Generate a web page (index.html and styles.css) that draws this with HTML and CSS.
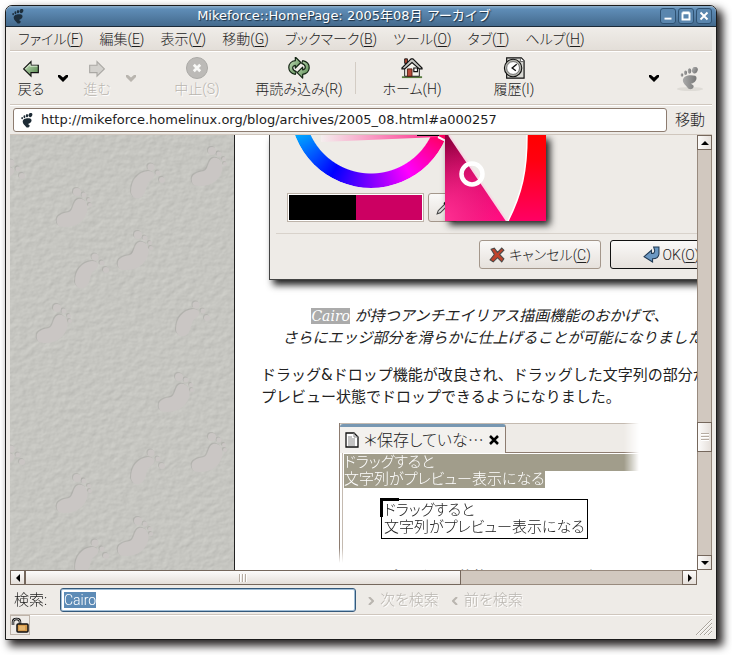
FILE: index.html
```
<!DOCTYPE html>
<html lang="ja">
<head>
<meta charset="utf-8">
<title>Mikeforce::HomePage: 2005年08月 アーカイブ</title>
<link rel="stylesheet" href="styles.css">
</head>
<body>
<svg class="defs" width="0" height="0" aria-hidden="true">
  <defs>
    <symbol id="gnome" viewBox="2 0 21 26">
      <ellipse cx="18.5" cy="3.5" rx="3.2" ry="3.8" transform="rotate(25 18.500 3.500)"/>
      <ellipse cx="12.500" cy="4.500" rx="2" ry="3"/>
      <ellipse cx="8" cy="6.500" rx="1.700" ry="2.500"/>
      <ellipse cx="4" cy="9" rx="1.500" ry="2"/>
      <path d="M19 10C13 8 5 10 5 15c0 4 4 6 5 8 1 3 6 3 7 0 1-2-1-3-3-4 4 0 9-6 5-9z"/>
    </symbol>
    <symbol id="caret" viewBox="0 0 10 7"><path d="M0 0l2 0 3 2.500L8 0h2v2L5 7 0 2z"/></symbol>
    <linearGradient id="green" x1="0" y1="0" x2="1" y2="1">
      <stop offset="0" stop-color="#cfe6c4"/><stop offset="1" stop-color="#4c8045"/>
    </linearGradient>
    <g id="foot-a">
      <path d="M-20 12C-22 4-14 2-8 1-3-1-5-9 1-12 7-14 12-7 10 1 7 11-2 16-11 16-17 16-19 15-20 12z"/>
      <circle cx="0" cy="-19" r="4"/><circle cx="7" cy="-16" r="2.500"/><circle cx="12" cy="-11" r="2"/><circle cx="13" cy="-6" r="2"/>
    </g>
    <g id="foot-b">
      <path d="M-13 9C-13-3-6-11 4-12 11-12 12-7 7-3 2 0 3 6 0 11-3 17-12 17-13 9z"/>
      <circle cx="7" cy="-16" r="3.500"/><circle cx="14" cy="-10" r="2.500"/><circle cx="18" cy="-3" r="3"/>
    </g>
    <g id="feet">
      <use href="#foot-a" x="67" y="76"/><use href="#foot-b" x="134" y="48"/>
      <use href="#foot-a" x="202" y="35"/><use href="#foot-a" x="128" y="119"/>
      <use href="#foot-b" x="78" y="138"/><use href="#foot-a" x="47" y="192"/>
      <use href="#foot-b" x="179" y="186"/><use href="#foot-a" x="169" y="261"/>
      <use href="#foot-b" x="-6" y="44"/>
    </g>
    <filter id="emboss" x="0" y="0" width="100%" height="100%" color-interpolation-filters="sRGB">
      <feTurbulence type="fractalNoise" baseFrequency="0.13 0.17" numOctaves="4" seed="8"/>
      <feDiffuseLighting surfaceScale="0.300" diffuseConstant="1.120" lighting-color="#c6c6c1">
        <feDistantLight azimuth="45" elevation="63"/>
      </feDiffuseLighting>
    </filter>
  </defs>
</svg>

<main class="window">
  <header class="titlebar">
    <svg class="title-icon"><use href="#gnome"/></svg>
    <h1>Mikeforce::HomePage: 2005年08月 アーカイブ</h1>
    <div class="window-buttons">
      <button aria-label="最小化"><svg viewBox="0 0 16 16"><path d="M4 11h8"/></svg></button>
      <button aria-label="最大化"><svg viewBox="0 0 16 16"><path d="M4 5h8v7H4z M4 4h8"/></svg></button>
      <button aria-label="閉じる"><svg viewBox="0 0 16 16"><path d="M4 4l8 8M12 4l-8 8"/></svg></button>
    </div>
  </header>

  <div class="frame">
    <nav class="menubar">
      <button>ファイル(<u>F</u>)</button>
      <button>編集(<u>E</u>)</button>
      <button>表示(<u>V</u>)</button>
      <button>移動(<u>G</u>)</button>
      <button>ブックマーク(<u>B</u>)</button>
      <button>ツール(<u>O</u>)</button>
      <button>タブ(<u>T</u>)</button>
      <button>ヘルプ(<u>H</u>)</button>
    </nav>

    <div class="toolbar">
      <button class="tool back">
        <svg viewBox="0 0 24 24"><path d="M4 13l8-8v4h8v8h-8v4z" fill="url(#green)" stroke="#111" stroke-width="1.200"/><path d="M6 13l5-5v2h8" fill="none" stroke="#e3f1dc"/></svg>
        <span>戻る</span>
      </button>
      <button class="drop" aria-label="戻る履歴"><svg><use href="#caret"/></svg></button>
      <button class="tool forward" disabled>
        <svg viewBox="0 0 24 24"><path d="M20 13l-8-8v4H4v8h8v4z" fill="#d3d1cd" stroke="#aaa8a4" stroke-width="1.200"/></svg>
        <span>進む</span>
      </button>
      <button class="drop" aria-label="進む履歴" disabled><svg><use href="#caret"/></svg></button>
      <button class="tool wide" disabled>
        <svg viewBox="0 0 24 24"><circle cx="12" cy="12" r="11.500" fill="#bcbab7" stroke="#a9a7a4"/><path d="M8.500 8.500l7 7M15.500 8.500l-7 7" stroke="#f8f8f6" stroke-width="3"/></svg>
        <span>中止(S)</span>
      </button>
      <button class="tool reload">
        <svg viewBox="0 0 24 24"><g fill="url(#green)" stroke="#142514" stroke-width="1.300" stroke-linejoin="round"><path d="M8 19C-2 17-1 5 8 4V0l6 6-6 6V9c-4 1-4 5 1 7z"/><path d="M16 4c10 2 9 14 0 15v4l-6-6 6-6v3c4-1 4-5-1-7z"/></g></svg>
        <span>再読み込み(R)</span>
      </button>
      <span class="tool-sep"></span>
      <button class="tool home">
        <svg viewBox="0 0 24 24"><path d="M1 21h22v2H1z" fill="#557b3d"/><path d="M4 12l8-8 8 8v9H4z" fill="#f4f3ed" stroke="#111"/><path d="M4 2h3v5H4z" fill="#b84630" stroke="#111"/><path d="M1 12L11 2h2l10 10v1h-3l-8-7-8 7H1z" fill="#c8c8c4" stroke="#111" stroke-width="1.200"/><path d="M7 13h5v8H7z" fill="#b84a3a" stroke="#501c12"/><path d="M14 12h4v4h-4z" fill="#fff" stroke="#111" stroke-width="1.300"/></svg>
        <span>ホーム(H)</span>
      </button>
      <button class="tool wide">
        <svg viewBox="0 0 24 24"><path d="M4 1h16l3 3v19H4z" fill="#d9d9d4" stroke="#111" stroke-width="1.300"/><path d="M19 1v4h4" fill="#fff" stroke="#555"/><circle cx="11" cy="12" r="9.500" fill="#b3b3ad" stroke="#111" stroke-width="1.200"/><circle cx="11" cy="12" r="7" fill="#fff" stroke="#666"/><path d="M15 8l-5 4 4 3" fill="none" stroke="#111" stroke-width="1.500"/></svg>
        <span>履歴(I)</span>
      </button>
      <button class="drop overflow" aria-label="その他"><svg><use href="#caret"/></svg></button>
      <svg class="throbber" viewBox="0 0 30 32"><defs><linearGradient id="gray" x1="0" y1="0" x2="1" y2="0"><stop offset="0" stop-color="#aaa"/><stop offset="1" stop-color="#777"/></linearGradient></defs><ellipse cx="15" cy="27" rx="13" ry="2" fill="#dedbd6"/><use href="#gnome" x="5" y="5" width="19" height="23" fill="url(#gray)"/></svg>
    </div>

    <form class="location">
      <label class="url-box"><svg><use href="#gnome"/></svg><input aria-label="アドレス" value="http://mikeforce.homelinux.org/blog/archives/2005_08.html#a000257"></label>
      <button type="button">移動</button>
    </form>

    <div class="browser">
      <section class="viewport">
        <aside class="wallpaper">
          <svg aria-hidden="true">
            <rect width="100%" height="100%" filter="url(#emboss)"/>
            <g fill="#a3a29e" opacity=".5"><use href="#feet" x="-1" y="-1"/><use href="#feet" x="-1" y="285"/></g>
            <g fill="#cac6c4"><use href="#feet"/><use href="#feet" y="286"/></g>
          </svg>
        </aside>

        <article class="page">
          <div class="dialog">
            <div class="wheel-area">
              <div class="hue-ring"></div>
              <svg class="triangle" viewBox="0 0 176 60">
                <defs><linearGradient id="pinkfade"><stop offset="0" stop-color="#f4eeee"/><stop offset="1" stop-color="#ff2b89"/></linearGradient></defs>
                <path d="M45 0h118v2L45 7z" fill="url(#pinkfade)"/><path d="M141 0h22v1h-22z" fill="#000"/><path d="M162 2l14 7" stroke="#fff" stroke-width="2"/>
              </svg>
              <svg class="magnifier" viewBox="0 0 101 86">
                <defs>
                  <linearGradient id="shade" x1=".1" y1="0" x2=".8" y2="1"><stop offset="0" stop-color="#90003f"/><stop offset=".5" stop-color="#d60868"/><stop offset="1" stop-color="#ff0c80"/></linearGradient>
                  <linearGradient id="rededge" x1="0" y1="0" x2="0" y2="1"><stop offset="0" stop-color="#ff0000"/><stop offset=".3" stop-color="#ff0010"/><stop offset="1" stop-color="#ff0064"/></linearGradient>
                  <radialGradient id="glow" cx="0" cy="1" r=".9"><stop offset="0" stop-color="#ff2f92"/><stop offset="1" stop-color="#ff2f92" stop-opacity="0"/></radialGradient>
                </defs>
                <path d="M0 0h101v86H0z" fill="#eeebe7"/>
                <path d="M0 0h4l58 86H0z" fill="url(#shade)"/><path d="M0 0h4l58 86H0z" fill="url(#glow)"/>
                <path d="M4 0l58 86" fill="none" stroke="#f7d9e5" stroke-width="2"/>
                <path d="M82 0C82 36 77 58 63 86h38V0z" fill="url(#rededge)"/>
                <path d="M82 0C82 36 77 58 63 86" fill="none" stroke="#fff" stroke-width="1.500"/>
                <circle cx="27" cy="39" r="10.500" fill="none" stroke="#fff" stroke-width="4.500"/>
              </svg>
            </div>
            <div class="swatch-row">
              <div class="swatch"><span class="old"></span><span class="new"></span></div>
              <button class="gtk-button picker" aria-label="色を取得"><svg viewBox="0 0 16 16"><path d="M2 14L3 11 10 4l2 2-7 7z" fill="#ddd" stroke="#444"/><path d="M9 3l4 4" stroke="#111" stroke-width="3"/></svg></button>
            </div>
            <hr>
            <div class="dialog-buttons">
              <button class="gtk-button"><svg viewBox="0 0 16 16"><path d="M2 3l3-1 3 4 4-4 2 2-4 4 4 4-2 3-4-4-4 4-3-2 4-5z" fill="#c0432b" stroke="#4d4a48"/></svg><span>キャンセル(<u>C</u>)</span></button>
              <button class="gtk-button default"><svg viewBox="0 0 16 16"><path d="M10 1h5v6c0 3-2 5-6 5v3L1 10l7-6v3c2 0 3 0 3-3z" fill="#6b98c3" stroke="#213a54"/></svg><span>OK(<u>O</u>)</span></button>
            </div>
          </div>

          <p class="caption"><span class="lead"><mark>Cairo</mark> が持つアンチエイリアス描画機能のおかげで、</span><br>さらにエッジ部分を滑らかに仕上げることが可能になりました。</p>
          <p>ドラッグ&amp;ドロップ機能が改良され、ドラッグした文字列の部分が<br>プレビュー状態でドロップできるようになりました。</p>

          <div class="editor">
            <div class="tabs">
              <div class="tab"><svg viewBox="0 0 14 16"><path d="M1 1h8l4 4v10H1z" fill="#fff" stroke="#111" stroke-width="1.300"/><path d="M9 1v4h4M3 5h4M3 7h7M3 9h7M3 11h7M3 13h7" fill="none" stroke="#888"/></svg><span>＊保存していな⋯</span><button aria-label="タブを閉じる"><svg viewBox="0 0 10 10"><path d="M1 1l8 8M9 1L1 9" stroke="#000" stroke-width="2.500"/></svg></button></div>
            </div>
            <div class="buffer">
              <div class="selected full">ドラッグすると</div>
              <div><span class="selected">文字列がプレビュー表示になる</span></div>
              <div class="drag-preview">ドラッグすると<br>文字列がプレビュー表示になる</div>
            </div>
          </div>
          <p class="caption">プレビュー状態のままドラッグする</p>
        </article>
      </section>

      <div class="scroll vertical">
        <button class="step" aria-label="上へ"><svg viewBox="0 0 8 8"><path d="M0 6l4-4 4 4z"/></svg></button>
        <span class="before"></span><span class="thumb"></span><span class="after"></span>
        <button class="step" aria-label="下へ"><svg viewBox="0 0 8 8"><path d="M0 2l4 4 4-4z"/></svg></button>
      </div>
      <div class="scroll horizontal">
        <button class="step" aria-label="左へ"><svg viewBox="0 0 8 8"><path d="M6 0L2 4l4 4z"/></svg></button>
        <span class="thumb"></span><span class="after"></span>
        <button class="step" aria-label="右へ"><svg viewBox="0 0 8 8"><path d="M2 0l4 4-4 4z"/></svg></button>
      </div>
    </div>

    <form class="findbar">
      <label for="find">検索:</label>
      <div class="find-box"><input id="find" value="Cairo"></div>
      <button type="button" disabled><svg viewBox="0 0 6 8"><path d="M1 0l4 4-4 4"/></svg>次を検索</button>
      <button type="button" disabled><svg viewBox="0 0 6 8"><path d="M5 0L1 4l4 4"/></svg>前を検索</button>
    </form>

    <footer class="statusbar">
      <div class="lock"><svg viewBox="0 0 18 18"><path d="M2 9V6c0-4 7-4 7 0v3" fill="none" stroke="#111" stroke-width="2.500"/><path d="M2 9V6c0-4 7-4 7 0v3" fill="none" stroke="#bbb"/><rect x="6" y="8" width="11" height="8" rx="1" fill="#d59b4c" stroke="#111" stroke-width="1.500"/><path d="M8 11h6M8 13h6" stroke="#f3ce90"/></svg></div>
      <svg class="grip" viewBox="0 0 16 16"><path d="M0 16L16 0M4 16L16 4M8 16l8-8M12 16l4-4" stroke="#aaa49c"/><path d="M1 16L16 1M5 16L16 5M9 16l7-7M13 16l3-3" stroke="#fff" stroke-width=".7"/></svg>
    </footer>
  </div>
</main>
<script src="script.js"></script>
</body>
</html>
```
FILE: script.js
```
const find = document.getElementById("find");
find.focus();
find.select();
```
FILE: styles.css
```
* { box-sizing: border-box; }
html { overflow: hidden; }
.defs { position: absolute; }
body {
  margin: 0;
  padding: 5px 15px 15px 5px;
  height: 100vh;
  overflow: hidden;
  background: #fff;
  color: #1c1c1c;
  font: 300 15px/20px Roboto, "Noto Sans CJK JP", sans-serif;
  font-feature-settings: "palt";
}
button, input { font: inherit; font-feature-settings: inherit; color: inherit; }
button { border: 0; padding: 0; background: none; white-space: nowrap; }
u { text-underline-offset: 2px; }

.window {
  display: flex;
  flex-direction: column;
  height: 100%;
  border: 1px solid #1b1b1b;
  border-radius: 7px 7px 0 0;
  background: #eeebe7;
  box-shadow: 5px 5px 8px 1px #2a2727;
}
.titlebar {
  display: flex;
  align-items: center;
  height: 21px;
  padding: 0 4px 0 6px;
  border-bottom: 1px solid #1b2a38;
  border-radius: 6px 6px 0 0;
  background: linear-gradient(#8fb0cd, #5f8db7 3px, #446a8d);
}
.title-icon { width: 12px; height: 15px; fill: #1d2e3c; }
h1 {
  flex: 1;
  margin: 0;
  padding-left: 4px;
  text-align: center;
  color: #fff;
  font: 400 13px/20px "DejaVu Sans", "Noto Sans CJK JP", sans-serif;
  font-feature-settings: normal;
  text-shadow: 1px 1px 1px #1c2f40;
}
.window-buttons { display: flex; gap: 2px; }
.window-buttons button {
  width: 16px;
  height: 16px;
  border: 1px solid #2f5272;
  border-radius: 3px;
  background: #5a86ae;
}
.window-buttons svg { display: block; width: 14px; height: 14px; fill: none; stroke: #fff; stroke-width: 2.2; }

.frame { flex: 1; min-height: 0; display: flex; flex-direction: column; padding: 0 4px 4px; }
.menubar {
  display: flex;
  gap: 16px;
  height: 24px;
  padding: 0 8px;
  border-bottom: 1px solid #cfc6bd;
  background: linear-gradient(#f0ede9, #e3ded8);
  font-size: 14px;
}
.toolbar {
  display: flex;
  align-items: center;
  height: 54px;
  border-top: 1px solid #fff;
  border-bottom: 1px solid #cfc6bd;
  font-size: 14px;
}
.tool { display: flex; flex-direction: column; align-items: center; width: 94px; height: 42px; }
.tool svg { width: 24px; height: 22px; flex: none; }
.tool.back { width: 42px; }
.tool.forward { width: 46px; }
.tool.wide { width: 110px; }
.tool:disabled, .findbar button:disabled { color: #b9b5af; text-shadow: 1px 1px 0 #fff; }
.drop { width: 22px; height: 12px; }
.drop svg { display: block; width: 10px; height: 7px; margin: auto; fill: #000; }
.drop:disabled svg { fill: #b9b5af; }
.tool-sep { width: 1px; height: 32px; margin: 0 9px; background: #d3ccc4; }
.overflow { margin-left: auto; }
.throbber { width: 30px; height: 32px; margin: 0 7px 0 10px; }

.location {
  display: flex;
  align-items: center;
  height: 30px;
  padding: 0 7px 0 3px;
  gap: 8px;
  border-top: 1px solid #fff;
  border-bottom: 1px solid #cfc6bd;
}
.url-box {
  flex: 1;
  display: flex;
  align-items: center;
  gap: 8px;
  height: 24px;
  padding-left: 7px;
  border: 1px solid #8d7c70;
  border-radius: 3px;
  background: #fff;
}
.url-box svg { width: 12px; height: 15px; fill: #1d2b35; }
.url-box input { flex: 1; border: 0; padding: 0; outline: 0; background: none; font: 13px/20px "DejaVu Sans", sans-serif; }

.browser {
  flex: 1;
  min-height: 0;
  display: grid;
  grid-template: minmax(0, 1fr) 15px / minmax(0, 1fr) 15px;
}
.viewport { display: flex; overflow: hidden; background: #fff; }
.wallpaper { flex: none; width: 225px; border-right: 1px solid #222; background: #c6c6c1; }
.wallpaper svg { display: block; width: 100%; height: 100%; }
.page {
  flex: none;
  width: 504px;
  padding-left: 26px;
  color: #222;
  font: 400 15px/22px "DejaVu Sans", "Noto Sans CJK JP", sans-serif;
  font-feature-settings: normal;
}
.page p { margin: 0 0 15px; white-space: nowrap; }
.page .caption { text-align: center; font-style: italic; }
.lead { padding-right: 20px; }
mark { background: #ababab; color: #fff; font-family: "DejaVu Serif", serif; font-size: 14px; }

.dialog {
  width: 480px;
  height: 145px;
  margin: 0 0 25px 8px;
  padding: 0 16px 10px 6px;
  border: solid #444;
  border-width: 0 1px 1px;
  background: #eeebe7;
  box-shadow: 4px 5px 7px #222;
  font: 300 14px/20px Roboto, "Noto Sans CJK JP", sans-serif;
  font-feature-settings: "palt";
}
.wheel-area { position: relative; height: 58px; }
.hue-ring {
  position: absolute;
  left: 20px;
  bottom: 5px;
  width: 162px;
  height: 162px;
  margin-left: -6px;
  border-radius: 50%;
  background: conic-gradient(from 90deg, #f00, #f0f, #00f, #0ff, #0f0, #ff0, #f00);
  mask: radial-gradient(circle, transparent 66px, #000 67px);
}
.triangle { position: absolute; left: 0; top: 0; width: 176px; height: 60px; }
.magnifier { position: absolute; z-index: 1; left: 169px; top: 0; width: 101px; height: 86px; box-shadow: 4px 4px 7px #222; }
.swatch-row { display: flex; gap: 4px; padding-left: 11px; }
.swatch { display: flex; width: 137px; height: 29px; padding: 1px; border: 1px solid #bdb3a9; background: #fff; }
.swatch span { flex: 1; }
.old { background: #000; }
.new { background: #cc0062; }
.gtk-button {
  display: flex;
  align-items: center;
  justify-content: center;
  gap: 3px;
  width: 122px;
  height: 29px;
  border: 1px solid #a4978b;
  border-radius: 3px;
  background: linear-gradient(#faf9f8, #e6e1dc);
}
.gtk-button svg { width: 17px; height: 17px; }
.picker { width: 30px; }
.default { border-color: #111; }
.dialog hr { margin: 11px 0 6px; border: 0; border-top: 1px solid #d8d2cb; }
.dialog-buttons { display: flex; justify-content: flex-end; gap: 9px; }

.editor {
  width: 322px;
  height: 143px;
  margin: 0 auto;
  border-left: 1px solid #8d7c70;
  mask: linear-gradient(90deg, #000 285px, transparent 300px), linear-gradient(#000 125px, transparent 140px);
  mask-composite: intersect;
  font: 300 15px/17px Roboto, "Noto Sans CJK JP", sans-serif;
  font-feature-settings: "palt";
}
.tabs { height: 30px; border-top: 1px solid #c4bab0; border-bottom: 1px solid #8d7c70; background: #eeebe7; }
.tab {
  display: flex;
  align-items: center;
  gap: 5px;
  width: 166px;
  height: 29px;
  padding-left: 5px;
  border-top: 3px solid #7797b2;
  border-right: 1px solid #8d7c70;
  border-radius: 3px 3px 0 0;
  background: #f3f1ee;
  font-size: 16px;
  white-space: nowrap;
}
.tab > svg { flex: none; width: 14px; height: 16px; }
.tab button { flex: none; margin-left: auto; width: 10px; margin-right: 8px; }
.tab button svg { display: block; width: 10px; height: 10px; }
.buffer { min-height: 113px; margin-left: 2px; padding: 1px 0 0 1px; border-left: 1px solid #c4bab0; }
.selected { background: #a19d8b; color: #fff; }
span.selected { display: inline-block; }
.full { width: 100%; }
.drag-preview { position: relative; width: max-content; margin: 11px 0 0 37px; padding: 2px; border: 1px solid #000; }
.drag-preview::before {
  content: "";
  position: absolute;
  left: -2px;
  top: -2px;
  width: 16px;
  height: 16px;
  border: solid #000;
  border-width: 3px 0 0 3px;
}

.scroll { display: flex; background: #d1c8bf; border: 1px solid #988a7e; }
.vertical { flex-direction: column; border-width: 0 1px; }
.horizontal { border-width: 1px 0; }
.step, .thumb { background: linear-gradient(90deg, #fcfbfa, #e5dfda); border: 1px solid #75675c; }
.horizontal .step, .horizontal .thumb { background: linear-gradient(#fcfbfa, #e5dfda); }
.step { flex: none; width: 15px; height: 15px; }
.step svg { display: block; width: 8px; height: 8px; margin: auto; }
.vertical .step { margin: 0 -1px; }
.horizontal .step { margin: -1px 0; }
.vertical .before { flex: 272; }
.vertical .thumb { flex: 0 0 30px; margin: 0 -1px; }
.vertical .after { flex: 103; }
.horizontal .thumb { flex: 435; margin: -1px 0; }
.horizontal .after { flex: 222; }
.thumb { display: grid; place-items: center; }
.thumb::before { content: ""; width: 8px; height: 8px; }
.vertical .thumb::before { background: repeating-linear-gradient(#b6aca2 0 1px, #fff 1px 2px, transparent 2px 3px); }
.horizontal .thumb::before { background: repeating-linear-gradient(90deg, #b6aca2 0 1px, #fff 1px 2px, transparent 2px 3px); }

.findbar { display: flex; align-items: center; height: 29px; padding: 0 4px; }
.findbar label { width: 46px; }
.find-box { width: 296px; height: 24px; margin-right: 12px; border: 1px solid #35597b; border-radius: 3px; background: #fff; box-shadow: inset 0 0 0 1px #9fbdd6; }
.find-box input { display: block; width: 100%; height: 22px; padding: 0 3px; border: 0; outline: 0; background: none; font-size: 14px; }
.find-box input::selection { background: #5d8bb6; color: #fff; }
.findbar button { margin-right: 13px; }
.findbar button svg { width: 6px; height: 8px; margin-right: 6px; fill: none; stroke: #b9b5af; stroke-width: 2; }
.statusbar { display: flex; justify-content: space-between; align-items: flex-end; height: 21px; border-top: 1px solid #cfc6bd; box-shadow: inset 0 1px 0 #fff; }
.lock { width: 20px; height: 20px; border: 1px solid #bdb3a9; }
.lock svg { display: block; width: 18px; height: 18px; }
.grip { width: 16px; height: 16px; }
```
